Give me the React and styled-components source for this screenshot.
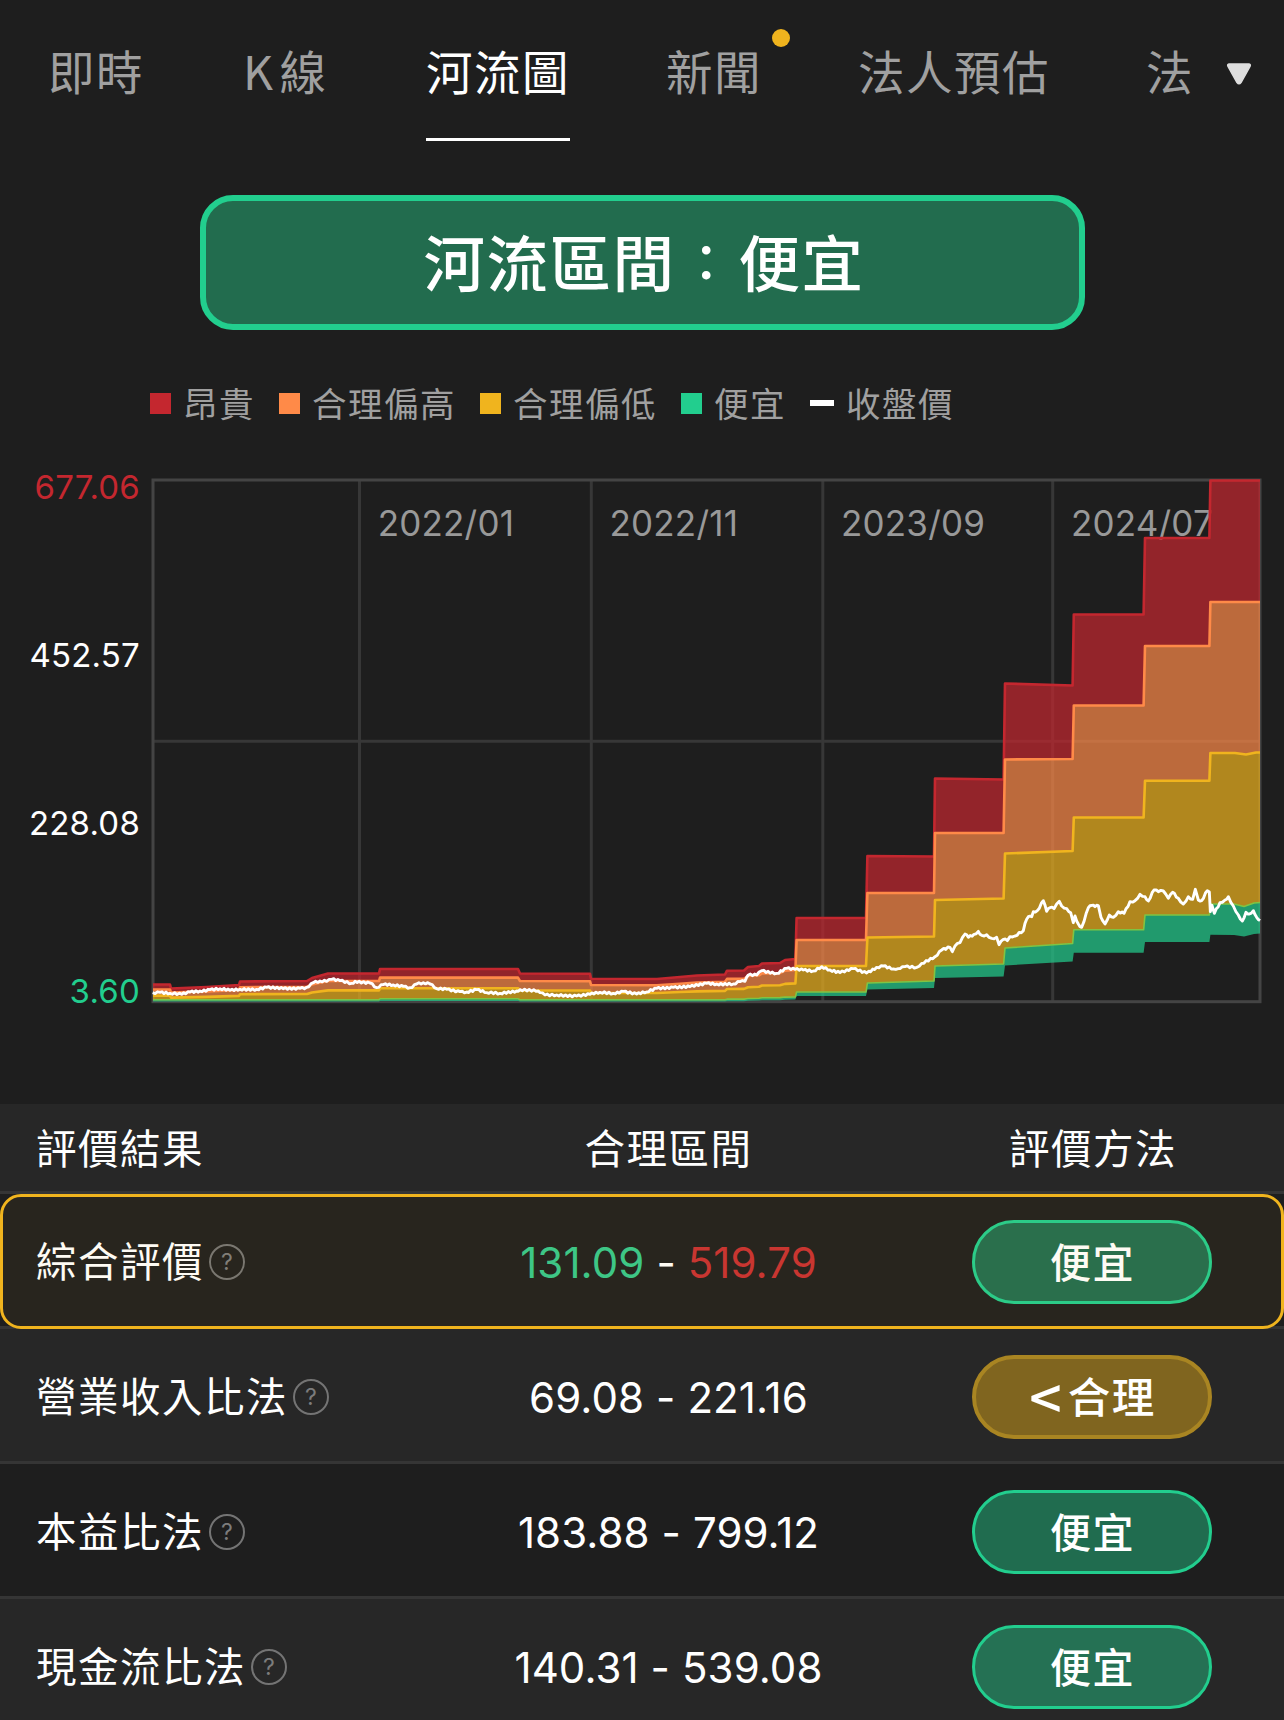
import React from "react";
import styled, { createGlobalStyle } from "styled-components";

const CJK = '"Noto Sans CJK TC", sans-serif';
const NUM = 'Inter, "Noto Sans CJK TC", sans-serif';

const C = {
  bg: "#1e1e1e",
  stripe: "#272727",
  rule: "#353535",
  grey: "#a0a0a0",
  red: "#c4272f",
  orange: "#ff8a48",
  yellow: "#f0b41e",
  green: "#22ce8e",
};

const Global = createGlobalStyle`
  html, body { margin: 0; background: ${C.bg}; }
  *, *::before, *::after { box-sizing: border-box; }
`;

const Page = styled.main`
  width: 1284px;
  height: 1720px;
  overflow: hidden;
  background: ${C.bg};
  color: #fff;
  font-family: ${CJK};
  letter-spacing: 1.5px;
  white-space: nowrap;
`;

/* ---------- tabs ---------- */

const TabBar = styled.nav`
  display: flex;
  height: 141px;
`;

const TabScroller = styled.div`
  display: flex;
  gap: 96px;
  width: 1200px;
  padding-left: 48px;
  overflow: hidden;
`;

const Tab = styled.div`
  position: relative;
  flex: none;
  width: ${(p) => p.$width}px;
  height: 141px;
  padding-left: ${(p) => p.$inset || 0}px;
  border-bottom: 3px solid ${(p) => (p.$active ? "#fff" : "transparent")};
  color: ${(p) => (p.$active ? "#fff" : C.grey)};
  font-size: 46.5px;
  line-height: 140px;
  word-spacing: -7px;
`;

const Dot = styled.span`
  position: absolute;
  top: 29px;
  left: 106px;
  width: 18px;
  height: 18px;
  border-radius: 50%;
  background: ${C.yellow};
`;

const TabMore = styled.div`
  display: flex;
  align-items: center;
  justify-content: center;
  flex: 1;
  padding: 7px 7px 0 0;
`;

/* ---------- banner ---------- */

const Banner = styled.section`
  display: flex;
  align-items: center;
  justify-content: center;
  width: 885px;
  height: 135px;
  margin: 54px 0 0 200px;
  padding: 0 0 4px 3px;
  border: 6px solid ${C.green};
  border-radius: 33px;
  background: #226c4e;
  font-size: 61.5px;
  font-weight: 500;
  line-height: 1;
`;

const Colon = styled.span`
  width: 63px;
  font-size: 51px;
  text-align: center;
`;

/* ---------- legend ---------- */

const Legend = styled.div`
  display: flex;
  gap: 24px;
  height: 48px;
  margin: 49px 0 0 150px;
`;

const LegendItem = styled.div`
  display: flex;
  align-items: center;
  gap: 12px;
  color: ${C.grey};
  font-size: 34.5px;
  line-height: 46px;
`;

const LegendText = styled.span`
  height: 48px;
`;

const Swatch = styled.i`
  width: ${(p) => (p.$line ? 24 : 21)}px;
  height: ${(p) => (p.$line ? 6 : 21)}px;
  background: ${(p) => p.$color};
`;

/* ---------- chart ---------- */

const ChartPanel = styled.section`
  display: flex;
  height: 677px;
`;

const YAxis = styled.div`
  display: flex;
  flex-direction: column;
  justify-content: space-between;
  width: 140px;
  height: 544px;
  margin-top: 40px;
  font-family: ${NUM};
  font-size: 33px;
  letter-spacing: 0.2px;
  line-height: 40px;
  text-align: right;
`;

const YLabel = styled.span`
  color: ${(p) => p.$color || "#fff"};
`;

const Plot = styled.svg`
  display: block;
  width: 1144px;
  height: 600px;
`;

const DateLabel = styled.text`
  font-family: ${NUM};
  font-size: 35px;
  letter-spacing: 0.2px;
  fill: #999;
`;

const Z = 1006;
const RATIO = [1, 0.768, 0.481, 0.194, 0.136];

const earlyRed = [
  [153, 984.5], [170, 984.5], [171, 988.5], [207, 987], [239, 985], [240, 981.5],
  [307, 981], [312, 978], [328, 973.5], [379, 973.5], [380, 969], [518, 969],
  [520, 973.5], [590, 973.7], [591, 978.7], [657, 979], [680, 977], [697, 975.5],
  [725, 974.5], [727, 970.7], [744, 970.5], [748, 967], [759, 966], [762, 963.5],
  [780, 963], [785, 960], [795.4, 959],
];

// x start, x end, then start/end height of every band edge
const steps = [
  [796.6, 866, [918, 918], [940, 940], [966, 966], [992, 992], [996, 996]],
  [867.4, 934, [856, 856.5], [893, 893], [937.5, 936.5], [983, 981], [989.5, 988]],
  [935, 1003.6, [778.5, 779.5], [833, 833], [900, 898.5], [966, 964], [978, 976.5]],
  [1005, 1072.6, [683.5, 685.5], [759.5, 759], [853.5, 851], [948, 943.5], [965.5, 961.5]],
  [1073.8, 1143.6, [614.5, 614.5], [705.5, 705.5], [817.5, 817.5], [929.8, 929.8], [952.7, 952.7]],
  [1145, 1209.4, [538, 538], [646, 646], [780.7, 780.7], [915, 915], [942, 942]],
];

const lastStep = [
  [[1210.4, 480.5], [1260, 480.5]],
  [[1210.4, 602], [1260, 602]],
  [[1210.4, 753], [1235, 753], [1246, 754.5], [1256, 752.5], [1260, 752.5]],
  [[1210.4, 904], [1234, 904], [1244, 906.5], [1254, 903], [1260, 902.5]],
  [[1210.4, 934.7], [1234, 935], [1244, 936.5], [1254, 934], [1260, 933.5]],
];

const edge = (i) => {
  const pts = earlyRed.map(([x, y]) => [
    x,
    Math.min(Z - (Z - y) * RATIO[i], i === 4 ? 1001.5 : i === 3 ? 999.8 : 2000),
  ]);
  steps.forEach((s) => {
    pts.push([s[0], s[2 + i][0]], [s[1], s[2 + i][1]]);
  });
  return pts.concat(lastStep[i]);
};

const edges = [0, 1, 2, 3, 4].map(edge);
const toPoints = (pts) => pts.map((p) => p.join(",")).join(" ");
const band = (i) => toPoints(edges[i].concat([...edges[i + 1]].reverse()));
const BAND_COLORS = [C.red, C.orange, C.yellow, C.green];

const scaleFrom = (ox, oy, flat) => {
  const out = [];
  for (let i = 0; i < flat.length; i += 2) out.push([ox + flat[i] / 3, oy + flat[i + 1] / 3]);
  return out;
};

// splits long segments and adds the small day-to-day movement
const withTicks = (pts) => {
  const out = [pts[0]];
  let k = 0;
  for (let i = 1; i < pts.length; i += 1) {
    const [x0, y0] = pts[i - 1];
    const [x1, y1] = pts[i];
    const n = Math.max(1, Math.round((x1 - x0) / 2.2));
    for (let j = 1; j <= n; j += 1) {
      k += 1;
      const wobble = j === n ? 0 : (k % 2 ? 1 : -1) * (0.5 + 0.5 * Math.abs(Math.sin(k * 1.7)));
      out.push([x0 + ((x1 - x0) * j) / n, y0 + ((y1 - y0) * j) / n + wobble]);
    }
  }
  return out;
};

const price = withTicks([
  ...scaleFrom(140, 940, [
    38,158,60,157,90,160,125,163,150,156,180,153,210,149,240,146,270,151,300,148,350,148,
    380,142,430,146,480,145,500,142,520,128,540,123,560,124,575,118,600,122,635,130,645,124,
    690,129,710,143,730,134,760,135,790,139,810,143,830,132,850,128,870,132,890,146,920,148,
    960,155,980,156,1010,149,1040,158,1080,160,1130,153,1140,149,1195,153,
  ]),
  ...scaleFrom(540, 880, [
    0,338,15,345,50,345,110,348,150,343,180,337,220,340,250,334,290,342,320,336,350,325,
    400,322,450,320,500,310,530,312,580,312,600,305,615,304,625,285,650,285,665,272,710,280,
    740,265,765,268,790,270,820,273,845,260,870,270,900,278,940,266,980,279,1010,262,1030,258,
    1060,267,1075,266,
  ]),
  ...scaleFrom(900, 840, [
    0,386,15,380,50,382,65,370,105,350,125,330,150,322,157,335,165,318,180,308,195,282,205,292,
    222,283,235,274,245,286,260,284,275,295,290,292,297,314,310,298,322,302,330,290,345,288,
    370,272,375,250,385,230,395,230,400,215,412,212,430,182,440,214,450,203,462,206,478,184,
    485,198,500,206,512,218,520,248,525,228,535,252,545,262,565,203,575,196,585,200,595,197,
    603,232,615,252,628,225,640,232,655,215,672,220,690,185,705,182,720,163,735,170,745,183,
    762,150,775,155,790,153,797,162,805,175,818,157,835,175,850,192,865,170,878,178,886,148,
    895,180,905,182,922,152,928,156,931,215,936,196,943,220,960,188,975,180,985,170,1000,198,
    1015,225,1027,243,1038,217,1048,222,1060,212,1070,232,1080,242,
  ]),
]);

const DATES = [
  [359.5, "2022/01"],
  [591.3, "2022/11"],
  [822.8, "2023/09"],
  [1052.7, "2024/07"],
];

function RiverChart() {
  return (
    <Plot viewBox="140 427 1144 600">
      <g stroke="#373737" strokeWidth="3">
        <line x1="153" y1="741.3" x2="1260" y2="741.3" />
        {DATES.map(([x]) => (
          <line key={x} x1={x} y1="480" x2={x} y2="1001" />
        ))}
      </g>
      <rect x="153" y="480" width="1107" height="521.7" fill="none" stroke="#444" strokeWidth="3" />
      {DATES.map(([x, label]) => (
        <DateLabel key={label} x={x + 18.2} y="536">{label}</DateLabel>
      ))}
      {BAND_COLORS.map((color, i) => (
        <g key={color}>
          <polygon points={band(i)} fill={color} fillOpacity="0.7" />
          <polyline
            points={toPoints(edges[i])}
            fill="none"
            stroke={i === 3 ? "#7fc444" : color}
            strokeWidth={i === 3 ? 1.6 : 2.6}
            strokeLinejoin="round"
          />
        </g>
      ))}
      <polyline points={toPoints(price)} fill="none" stroke="#fff" strokeWidth="2.9" strokeLinejoin="round" />
    </Plot>
  );
}

/* ---------- table ---------- */

const Table = styled.section`
  display: flex;
  flex-direction: column;
`;

const Row = styled.div`
  position: relative;
  display: grid;
  grid-template-columns: 437px 463px 384px;
  height: 135px;
  padding-top: 26px;
  align-items: start;
  justify-items: center;
  border-bottom: 3px solid ${C.rule};
  background: ${(p) => (p.$striped ? C.stripe : C.bg)};
  font-size: 40.5px;
  line-height: 84px;
`;

const HeadRow = styled(Row)`
  height: 90px;
  padding-top: 1px;
`;

const HeadCell = styled.span`
  justify-self: ${(p) => (p.$start ? "start" : "center")};
  padding-left: ${(p) => p.$inset || 0}px;
`;

const Highlight = styled.div`
  position: absolute;
  inset: 0 0 -3px 0;
  border: 3px solid ${C.yellow};
  border-radius: 21px;
  background: rgba(240, 180, 30, 0.05);
`;

const NameCell = styled.div`
  display: flex;
  align-items: center;
  justify-self: start;
  gap: 5px;
  height: 84px;
  padding-left: 36px;
`;

const Name = styled.span`
  height: 84px;
  line-height: 80px;
`;

const Help = styled.span`
  width: 36px;
  height: 36px;
  border: 2px solid #747474;
  border-radius: 50%;
  color: #7c7c7c;
  font-family: ${NUM};
  font-size: 23px;
  letter-spacing: 0;
  line-height: 32px;
  text-align: center;
`;

const Range = styled.div`
  font-family: ${NUM};
  font-size: 42px;
  letter-spacing: 0.1px;
  line-height: 85px;
`;

const Value = styled.span`
  color: ${(p) => p.$color || "#fff"};
`;

const Pill = styled.div`
  display: flex;
  align-items: center;
  justify-content: center;
  gap: 6px;
  width: 240px;
  height: 84px;
  padding: 0 0 4px 1px;
  border: ${(p) => (p.$fair ? `4px solid #a98522` : `3px solid ${C.green}`)};
  border-radius: 42px;
  background: ${(p) => (p.$fair ? "#80651f" : "rgba(35, 205, 140, 0.45)")};
  font-size: ${(p) => (p.$fair ? 42.5 : 41)}px;
  font-weight: 500;
`;

const Less = styled.span`
  font-size: 57px;
  letter-spacing: 0;
`;

const ROWS = [
  { name: "綜合評價", low: "131.09", high: "519.79", highlight: true },
  { name: "營業收入比法", low: "69.08", high: "221.16", fair: true, striped: true },
  { name: "本益比法", low: "183.88", high: "799.12" },
  { name: "現金流比法", low: "140.31", high: "539.08", striped: true },
];

const TABS = [
  { label: "即時", width: 96 },
  { label: "K 線", width: 90, inset: 3 },
  { label: "河流圖", width: 144, active: true },
  { label: "新聞", width: 96, dot: true },
  { label: "法人預估", width: 192 },
  { label: "法", width: 48 },
];

const LEGEND = [
  ["昂貴", C.red],
  ["合理偏高", C.orange],
  ["合理偏低", C.yellow],
  ["便宜", C.green],
  ["收盤價", "#fff", true],
];

export default function App() {
  return (
    <Page lang="zh-Hant">
      <Global />
      <TabBar>
        <TabScroller>
          {TABS.map((t) => (
            <Tab key={t.label} $width={t.width} $inset={t.inset} $active={t.active}>
              {t.label}
              {t.dot && <Dot />}
            </Tab>
          ))}
        </TabScroller>
        <TabMore>
          <svg width="26" height="22" viewBox="0 0 26 22">
            <path d="M3 1H23Q25 1.400 24 3.500L15 19.500Q13 22 11 19.500L2 3.500Q1 1.400 3 1Z" fill="#dedede" stroke="#dedede" strokeWidth="1.500" />
          </svg>
        </TabMore>
      </TabBar>

      <Banner>
        <span>河流區間</span>
        <Colon>：</Colon>
        <span>便宜</span>
      </Banner>

      <Legend>
        {LEGEND.map(([label, color, line]) => (
          <LegendItem key={label}>
            <Swatch $color={color} $line={line} />
            <LegendText>{label}</LegendText>
          </LegendItem>
        ))}
      </Legend>

      <ChartPanel>
        <YAxis>
          <YLabel $color={C.red}>677.06</YLabel>
          <YLabel>452.57</YLabel>
          <YLabel>228.08</YLabel>
          <YLabel $color={C.green}>3.60</YLabel>
        </YAxis>
        <RiverChart />
      </ChartPanel>

      <Table>
        <HeadRow $striped>
          <HeadCell $start $inset={36}>評價結果</HeadCell>
          <HeadCell>合理區間</HeadCell>
          <HeadCell $inset={2}>評價方法</HeadCell>
        </HeadRow>
        {ROWS.map((r) => (
          <Row key={r.name} $striped={r.striped}>
            <NameCell>
              <Name>{r.name}</Name>
              <Help>?</Help>
            </NameCell>
            <Range>
              <Value $color={r.highlight && "#35c88c"}>{r.low}</Value>
              {" - "}
              <Value $color={r.highlight && "#c83032"}>{r.high}</Value>
            </Range>
            <Pill $fair={r.fair}>
              {r.fair && <Less>&lt;</Less>}
              <span>{r.fair ? "合理" : "便宜"}</span>
            </Pill>
            {r.highlight && <Highlight />}
          </Row>
        ))}
      </Table>
    </Page>
  );
}
